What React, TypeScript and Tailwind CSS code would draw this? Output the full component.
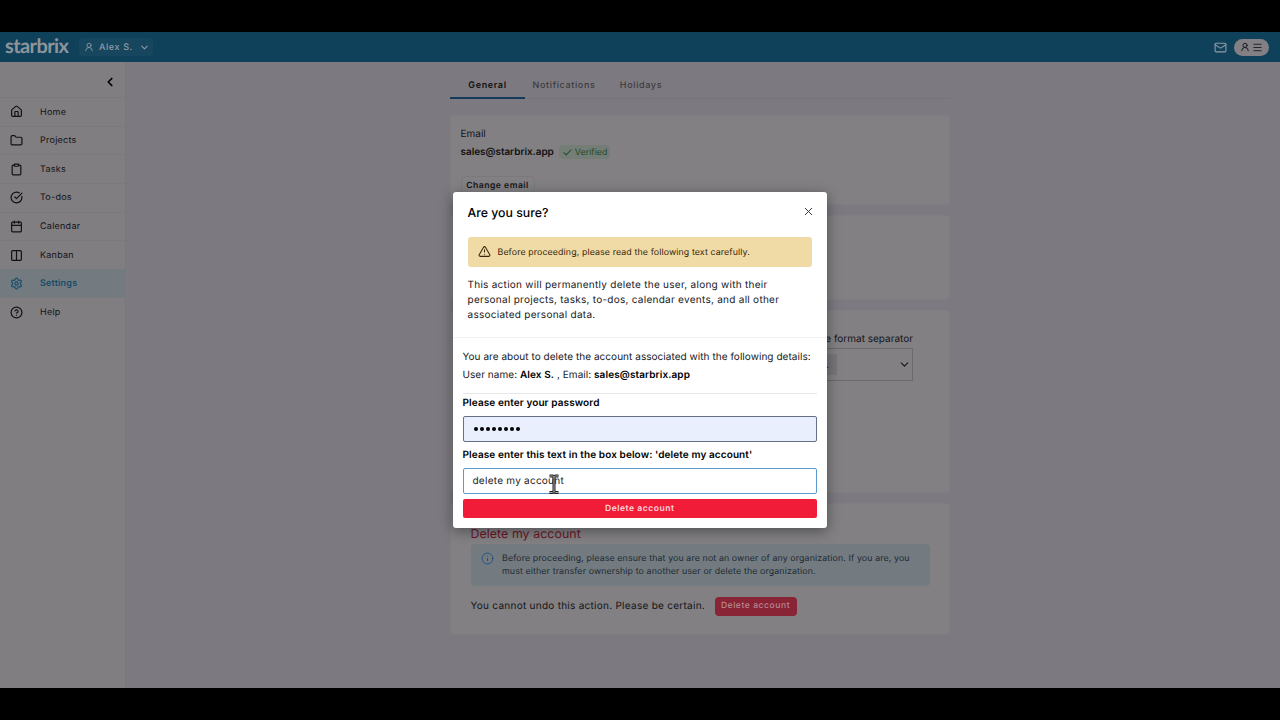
import type { ReactNode } from "react";
import {
  Calendar,
  Check,
  ChevronDown,
  ChevronLeft,
  CircleCheckBig,
  CircleQuestionMark,
  Clipboard,
  Columns2,
  Folder,
  House,
  Info,
  Mail,
  Menu,
  Settings,
  TriangleAlert,
  UserRound,
  X,
} from "lucide-react";

const navItems = [
  { label: "Home", icon: House },
  { label: "Projects", icon: Folder },
  { label: "Tasks", icon: Clipboard },
  { label: "To-dos", icon: CircleCheckBig },
  { label: "Calendar", icon: Calendar },
  { label: "Kanban", icon: Columns2 },
  { label: "Settings", icon: Settings, active: true },
  { label: "Help", icon: CircleQuestionMark },
];

const Header = () => (
  <header className="flex h-[30px] shrink-0 items-center bg-[#10415b] pl-[5px] pr-[11px] text-[#8f9ca5]">
    <span className="w-[74px] pb-[2px] font-['Lato'] text-[20px] font-bold leading-none tracking-[-0.6px] text-[#8d959b]">
      starbrix
    </span>
    <div className="flex h-[18px] w-[74px] items-center rounded-sm bg-[#17465f] pl-[5px]">
      <UserRound size={10} strokeWidth={2} className="shrink-0" />
      <span className="ml-[5px] w-[40px] shrink-0 pt-px text-[9px] font-medium tracking-[0.6px]">Alex S.</span>
      <ChevronDown size={11} strokeWidth={2.2} className="shrink-0" />
    </div>
    <Mail size={13} className="ml-auto" strokeWidth={2} />
    <div className="ml-[7px] flex h-[17px] w-[35px] items-center justify-center gap-[2px] rounded-full bg-[#828084] text-[#1d1b20]">
      <UserRound size={10} strokeWidth={2.4} />
      <Menu size={11} strokeWidth={2} />
    </div>
  </header>
);

const Sidebar = () => (
  <aside className="w-[126px] shrink-0 border-r border-[#7a787c] bg-[#817e81]">
    <div className="flex h-[35px] items-center justify-end pr-[8px] pt-[5px] text-black">
      <ChevronLeft size={14} strokeWidth={3} />
    </div>
    <nav>
      {navItems.map(({ label, icon: Icon, active }) => (
        <div
          key={label}
          className={
            active
              ? "flex h-[28.65px] items-center bg-[#737b80] pl-[10px] text-[#164c6a]"
              : "flex h-[28.65px] items-center border-t border-[#7b797c] pl-[10px] text-[#121114]"
          }
        >
          <Icon size={13} strokeWidth={2.2} />
          <span
            className={
              active
                ? "ml-[17px] pt-px text-[9px] font-semibold tracking-[0.2px]"
                : "ml-[17px] pt-px text-[9px] tracking-[0.25px]"
            }
          >
            {label}
          </span>
        </div>
      ))}
    </nav>
  </aside>
);

const Card = ({ className, children }: { className: string; children?: ReactNode }) => (
  <section className={`w-[499.5px] rounded-sm border border-[#7f7d80] bg-[#828083] ${className}`}>{children}</section>
);

const SettingsPage = () => (
  <main className="flex-1 bg-[#7c7a80] pl-[324px] pt-[8px] text-[#151417]">
    <div className="flex h-[29px] w-[500px] border-b border-[#767479] text-[9px] font-medium tracking-[0.63px] text-[#3c3a3e]">
      <div className="h-[29px] w-[75px] border-b-2 border-[#153a5a] pt-[9px] text-center font-semibold text-[#111]">
        General
      </div>
      <div className="w-[78px] pt-[9px] text-center">Notifications</div>
      <div className="w-[76px] pt-[9px] text-center">Holidays</div>
    </div>

    <Card className="mt-[16px] h-[90px] px-[9.5px] pt-[10px]">
      <div className="h-[16px] text-[10px] leading-[17px]">Email</div>
      <div className="mt-[1px] flex h-[18px] items-center">
        <span className="text-[10px] font-semibold tracking-[-0.05px] text-[#111]">sales@starbrix.app</span>
        <span className="ml-[5px] flex h-[14px] items-center rounded bg-[#757d77] px-[3px] text-[8.8px] tracking-[0.05px] text-[#1c4a26]">
          <Check size={11} strokeWidth={2.2} className="mr-[2px]" />
          <span className="pt-px">Verified</span>
        </span>
      </div>
      <div className="mt-[15px] flex h-[18px] w-[74px] items-center justify-center rounded-sm border border-[#7b797c] text-[8.6px] font-semibold tracking-[0.5px]">
        <span className="whitespace-nowrap pt-[2px]">Change email</span>
      </div>
    </Card>
    <Card className="mt-[10px] h-[85px]" />
    <Card className="mt-[10px] h-[183px] pl-[310px] pt-[20px]">
      <div className="w-[152px] text-right text-[10px] leading-[17px]">Date format separator</div>
      <div className="flex h-[33px] w-[152px] items-center justify-between border border-[#6c6a6e] pr-[1px]">
        <span className="ml-[55px] h-[21px] w-[20px] bg-[#77757a] pr-[8px] text-right text-[11px] leading-[21px]">.</span>
        <ChevronDown size={13} strokeWidth={2} />
      </div>
    </Card>
    <Card className="mt-[10px] h-[132px] px-[19.5px] pt-[19px]">
      <h2 className="text-[12.4px] leading-[21px] tracking-[0.05px] text-[#6c1725]">Delete my account</h2>
      <div className="flex h-[42px] w-[459px] rounded-sm bg-[#737b80] pl-[10.5px] pt-[8px] text-[#1d2a33]">
        <Info size={13} strokeWidth={1.8} className="shrink-0 text-[#264f7e]" />
        <p className="ml-[8px] pt-px whitespace-nowrap text-[8.8px] leading-[12.5px] tracking-[0.125px]">
          Before proceeding, please ensure that you are not an owner of any organization. If you are, you
          <br />
          must either transfer ownership to another user or delete the organization.
        </p>
      </div>
      <div className="mt-[10px] flex h-[20px] items-center">
        <span className="w-[244px] shrink-0 whitespace-nowrap pt-px text-[10px] tracking-[0.27px]">
          You cannot undo this action. Please be certain.
        </span>
        <span className="flex h-[19px] w-[82px] items-center justify-center rounded-sm bg-[#892336] pt-px text-[8.5px] font-medium tracking-[0.57px] text-[#b78a92]">
          Delete account
        </span>
      </div>
    </Card>
  </main>
);

const DeleteDialog = () => (
  <div className="absolute left-[452.5px] top-[192px] h-[335.5px] w-[374.5px] rounded-[3px] bg-white text-[#18181b] shadow-[0_3px_14px_rgba(0,0,0,0.4)]">
    <div className="flex h-[45px] items-center justify-between pl-[15px] pr-[12px] pb-[5px]">
      <h1 className="pt-[2px] text-[12.3px] font-medium text-black">Are you sure?</h1>
      <X size={13} strokeWidth={1.8} className="mb-[2px] text-[#333]" />
    </div>
    <div className="mx-[15px] flex h-[30px] items-center rounded-[3px] bg-[#f0daa6] pl-[10px] text-[#35270c]">
      <TriangleAlert size={13} strokeWidth={1.9} className="mb-px" />
      <span className="ml-[7px] whitespace-nowrap pt-[2px] text-[8.8px] tracking-[0.12px]">
        Before proceeding, please read the following text carefully.
      </span>
    </div>
    <p className="ml-[15px] mt-[11px] whitespace-nowrap text-[10px] leading-[15px] tracking-[0.27px]">
      This action will permanently delete the user, along with their
      <br />
      personal projects, tasks, to-dos, calendar events, and all other
      <br />
      associated personal data.
    </p>
    <div className="mt-[14px] border-t border-[#f3f3f3] px-[10px] pt-[11px]">
      <p className="whitespace-nowrap text-[10px] leading-[17.5px] tracking-[0.045px]">
        You are about to delete the account associated with the following details:
        <br />
        User name: <b className="font-semibold tracking-[0.1px] text-black">Alex S.</b> , Email:{" "}
        <b className="font-semibold tracking-[0.1px] text-black">sales@starbrix.app</b>
      </p>
      <div className="mt-[9px] border-t border-[#e7e7e7] pt-[1px] text-[10px] font-semibold tracking-[0.1px] text-black">
        <div className="h-[21px] leading-[16px]">Please enter your password</div>
        <div className="flex h-[25.5px] items-center rounded-[2px] border border-[#667085] bg-[#e9effd] pl-[10px]">
          <div className="flex gap-[2px]">
            {Array.from({ length: 8 }, (_, i) => (
              <i key={i} className="size-[4px] rounded-full bg-black" />
            ))}
          </div>
        </div>
        <div className="h-[26.5px] whitespace-nowrap pt-[5.5px] leading-[16px]">
          Please enter this text in the box below: 'delete my account'
        </div>
        <div className="flex h-[25.5px] items-center rounded-[2px] border border-[#5b9bcf] bg-white pl-[9px] pt-[2px] font-normal tracking-[0.25px] text-[#222]">
          delete my account
        </div>
        <div className="mt-[5.5px] flex h-[19px] items-center justify-center rounded-[2px] bg-[#f01c38] pt-[2px] text-[8.5px] tracking-[0.55px] text-[#ffd5db]">
          Delete account
        </div>
      </div>
    </div>
  </div>
);

// Text caret pointer hovering over the confirmation field
const TextCursor = () => (
  <svg className="absolute left-[548px] top-[474px]" width="12" height="20" viewBox="0 0 12 20" fill="none">
    <path d="M1.5 2H4.5L6 3L7.5 2H10.5M1.5 18.5H4.5L6 17.5L7.5 18.5H10.5M6 3V17.5" stroke="#222" strokeWidth="3" />
    <path d="M1.5 2H4.5L6 3L7.5 2H10.5M1.5 18.5H4.5L6 17.5L7.5 18.5H10.5M6 3V17.5" stroke="#aaa" strokeWidth="1" />
  </svg>
);

const App = () => (
  <div className="relative flex h-[720px] w-[1280px] flex-col overflow-hidden bg-black py-[32px] font-['Inter',sans-serif] [text-rendering:geometricPrecision]">
    <Header />
    <div className="flex min-h-0 flex-1">
      <Sidebar />
      <SettingsPage />
    </div>
    <DeleteDialog />
    <TextCursor />
  </div>
);

export default App;
